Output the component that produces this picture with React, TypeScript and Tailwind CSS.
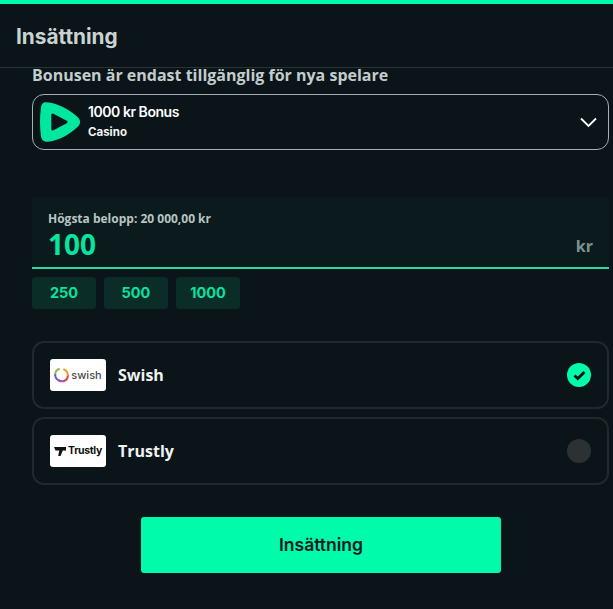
import React from "react";

const geo = { fontFamily: "Inter, sans-serif" };
const open = { fontFamily: "'Open Sans', sans-serif" };

function SwishLogo() {
  return (
    <div className="flex h-8 w-14 items-center justify-center gap-[2px] rounded-[3px] bg-white">
      <svg width="15" height="16" viewBox="0 0 15 16" fill="none" strokeWidth="2" strokeLinecap="round">
        <path d="M5 2C2.500 3 1 5.500 1.200 8" stroke="#8bbf5a" />
        <path d="M1.200 8C1.300 10.500 2.500 12.500 5 13.500" stroke="#6a5fd0" />
        <path d="M10 14C12.500 13 14 10.500 13.800 8" stroke="#e0423f" />
        <path d="M13.800 8C13.700 5.500 12.500 3.500 10 2.500" stroke="#f0a030" />
        <path d="M5 13.500C6.500 14.300 8.500 14.500 10 14" stroke="#a84cc0" />
      </svg>
      <span className="text-[11px] font-medium leading-none text-[#4a4a4a]" style={geo}>swish</span>
    </div>
  );
}

function TrustlyLogo() {
  return (
    <div className="flex h-8 w-14 items-center justify-center gap-[2px] rounded-[3px] bg-white">
      <svg width="12" height="9" viewBox="0 0 12 9" fill="#111">
        <path d="M0 0h12v3.500H8.800L6.500 9H4.200L5.300 3.500H2L1.500 3.500z" />
      </svg>
      <span className="mt-[1px] text-[10.500px] font-bold leading-none tracking-[-0.35px] text-[#111]" style={geo}>Trustly</span>
    </div>
  );
}

function Method({ logo, name, checked }: { logo: React.ReactNode; name: string; checked?: boolean }) {
  return (
    <div className="flex h-[68px] items-center rounded-xl border-2 border-[#22292b] px-4">
      {logo}
      <span className="ml-3 text-base font-bold text-[#eef2f1]" style={open}>{name}</span>
      <div
        className={checked ? "ml-auto flex h-6 w-6 items-center justify-center rounded-full bg-[#00fbaa]" : "ml-auto h-6 w-6 rounded-full bg-[#2c3233]"}
      >
        {checked && (
          <svg width="13" height="11" viewBox="0 0 13 11" fill="none">
            <path d="M1.500 5.500 4.800 8.500 11.500 2" stroke="#0a1216" strokeWidth="2.800" />
          </svg>
        )}
      </div>
    </div>
  );
}

export default function App() {
  return (
    <div className="h-[609px] w-[613px] overflow-hidden border-t-4 border-[#00fbaa] bg-[#0a1419]">
      <div className="flex h-[64px] items-center border-b border-[#2a3234] pl-4 pt-[3px]">
        <h1 className="text-[20.800px] font-bold text-[#c9d3d2]" style={geo}>Insättning</h1>
      </div>
      <div className="pl-8 pr-1">
        <p className="text-base leading-[14px] font-bold text-[#c2cdcc]" style={open}>
          Bonusen är endast tillgänglig för nya spelare
        </p>
        <div className="mt-3 flex h-14 items-center rounded-xl border border-[#a5b0b0] pl-[7px] pr-[11px]">
          <svg width="40" height="40" viewBox="0 0 40 40">
            <path
              fill="#00e8a0"
              d="M6 0.300C2.500 0.300 1.300 3 0.900 6C-0.300 15-0.300 25 0.900 34C1.300 37.500 3.500 40 7.500 39.800C19 39 30 32 37.800 24.800C40.800 21.800 40.800 18.200 37.800 15.200C30 8 18 1 6 0.300Z"
            />
            <path
              fill="#0a1419"
              stroke="#0a1419"
              strokeWidth="3"
              strokeLinejoin="round"
              d="M12.800 13 26 20 12.800 27Z"
            />
          </svg>
          <div className="ml-2 flex flex-col pb-[3px]">
            <span className="text-sm leading-[20px] font-semibold tracking-[-0.45px] text-white" style={geo}>1000 kr Bonus</span>
            <span className="mt-[2px] text-[11.500px] leading-[16px] font-bold text-[#f2f5f4]" style={geo}>Casino</span>
          </div>
          <svg className="ml-auto" width="17" height="11" viewBox="0 0 17 11" fill="none">
            <path d="M1 1.500 8.500 9 16 1.500" stroke="#fff" strokeWidth="1.800" />
          </svg>
        </div>

        <div className="mt-[47px] flex h-[72px] flex-col border-b-2 border-[#2fd9a0] bg-[#0b1b1d] px-4">
          <span className="mt-[14px] text-xs leading-[16px] font-bold text-[#b9c4c3]" style={open}>Högsta belopp: 20 000,00 kr</span>
          <div className="mt-[3px] flex items-end justify-between">
            <span className="text-[28px] leading-[28px] font-bold text-[#07e59f]" style={open}>100</span>
            <span className="text-base leading-[24px] font-bold text-[#7c9491]" style={open}>kr</span>
          </div>
        </div>

        <div className="mt-2 flex gap-2">
          {["250", "500", "1000"].map((v) => (
            <div key={v} className="flex h-8 w-16 items-center justify-center rounded-[3px] bg-[#0b2d28] text-[14.500px] font-bold text-[#0ae3a0]" style={geo}>{v}</div>
          ))}
        </div>

        <div className="mt-8 flex flex-col gap-2">
          <Method logo={<SwishLogo />} name="Swish" checked />
          <Method logo={<TrustlyLogo />} name="Trustly" />
        </div>

        <div className="mt-8 flex justify-center">
          <button className="ml-[1px] h-14 w-[360px] rounded-[3px] bg-[#00fbaa] pt-[1px] text-[17.500px] font-semibold text-[#0a1a1c]" style={geo}>Insättning</button>
        </div>
      </div>
    </div>
  );
}
